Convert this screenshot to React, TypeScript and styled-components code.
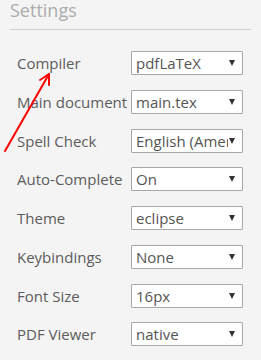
import React from 'react'
import styled, { createGlobalStyle } from 'styled-components'

const GlobalStyle = createGlobalStyle`
  html, body {
    margin: 0;
    padding: 0;
    background: #f4f4f4;
  }
  body {
    font-family: 'Open Sans', 'Liberation Sans', sans-serif;
  }
`

const Panel = styled.div`
  position: relative;
  width: 261px;
  height: 360px;
  padding: 2px 10px 0;
  box-sizing: border-box;
  background: #f4f4f4;
  overflow: hidden;
`

const Title = styled.h3`
  margin: -4px 0 0;
  padding-bottom: 7px;
  font-size: 18px;
  line-height: 24px;
  font-weight: 400;
  color: #acacac;
  border-bottom: 1px solid #cfcfcf;
`

const Form = styled.div`
  display: flex;
  flex-direction: column;
  gap: 14.75px;
  padding: 21px 0 0 7px;
`

const Row = styled.div`
  display: flex;
  align-items: center;
  height: 24px;
`

const Label = styled.label`
  width: 114px;
  flex: none;
  font-size: 15px;
  color: #5c5c5c;
  white-space: nowrap;
`

const Select = styled.div`
  display: flex;
  align-items: center;
  width: 112px;
  height: 24px;
  box-sizing: border-box;
  border: 1px solid #a8a8a8;
  border-radius: 1px;
  background: #fff;
  padding: 0 7px 0 4px;
  font-size: 15px;
  color: #555;
`

const Value = styled.span`
  flex: 1;
  overflow: hidden;
  white-space: nowrap;
  line-height: 22px;
`

const Caret = styled.span`
  flex: none;
  width: 0;
  height: 0;
  margin-left: 1px;
  border-left: 3px solid transparent;
  border-right: 3px solid transparent;
  border-top: 6px solid #333;
`

const Annotation = styled.svg`
  position: absolute;
  left: 0;
  top: 0;
  pointer-events: none;
`

const settings = [
  ['Compiler', 'pdfLaTeX'],
  ['Main document', 'main.tex'],
  ['Spell Check', 'English (American)'],
  ['Auto-Complete', 'On'],
  ['Theme', 'eclipse'],
  ['Keybindings', 'None'],
  ['Font Size', '16px'],
  ['PDF Viewer', 'native'],
]

const App = () => {
  return (
    <Panel>
      <GlobalStyle />
      <Title>Settings</Title>
      <Form>
        {settings.map(([label, value]) => (
          <Row key={label}>
            <Label>{label}</Label>
            <Select>
              <Value>{value}</Value>
              <Caret />
            </Select>
          </Row>
        ))}
      </Form>
      <Annotation width="60" height="160" viewBox="0 0 60 160">
        <g stroke="#f00" strokeWidth="2" fill="none" strokeLinecap="round">
          <line x1="5" y1="151" x2="49" y2="74" />
          <line x1="49" y1="74" x2="40" y2="80" />
          <line x1="49" y1="74" x2="49" y2="85" />
        </g>
      </Annotation>
    </Panel>
  )
}

export default App
